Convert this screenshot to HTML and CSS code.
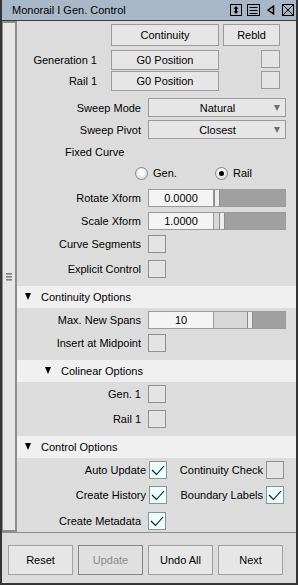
FILE: index.html
```html
<!DOCTYPE html>
<html>
<head>
<meta charset="utf-8">
<link rel="stylesheet" href="styles.css">
</head>
<body>
<div class="win">
  <div class="titlebar">
    <span class="title">Monorail I Gen. Control</span>
    <svg class="tools" width="64" height="14" viewBox="0 0 64 14">
      <rect x="0.5" y="1.5" width="11" height="11" fill="none" stroke="#000"/>
      <polygon points="6,3 3.5,5.8 8.5,5.8" fill="#000"/>
      <polygon points="6,11 3.5,8.2 8.5,8.2" fill="#000"/>
      <rect x="5" y="5" width="2" height="4" fill="#000"/>
      <rect x="17.5" y="1.5" width="12" height="11" fill="none" stroke="#000"/>
      <line x1="19.5" y1="4.5" x2="27.5" y2="4.5" stroke="#000"/>
      <line x1="19.5" y1="7.5" x2="27.5" y2="7.5" stroke="#000"/>
      <line x1="19.5" y1="10.5" x2="27.5" y2="10.5" stroke="#000"/>
      <polygon points="38,7 43.5,3.2 43.5,10.8" fill="none" stroke="#000" stroke-width="1.5" stroke-linejoin="miter"/>
      <rect x="52.5" y="1.5" width="11" height="11" fill="none" stroke="#000"/>
      <line x1="52.5" y1="1.5" x2="63.5" y2="12.5" stroke="#000"/>
      <line x1="63.5" y1="1.5" x2="52.5" y2="12.5" stroke="#000"/>
    </svg>
  </div>
  <div class="main">
    <div class="dock"><span class="grip"></span></div>
    <div class="content">
      <div class="top">
        <div class="row r-top">
          <div class="btn b-wide">Continuity</div>
          <div class="btn b-rebld">Rebld</div>
        </div>
        <div class="row r-gen mt4">
          <span class="glbl">Generation 1</span>
          <div class="btn b-wide">G0 Position</div>
          <div class="smallbox"></div>
        </div>
        <div class="row r-gen mt1">
          <span class="glbl">Rail 1</span>
          <div class="btn b-wide">G0 Position</div>
          <div class="smallbox"></div>
        </div>
        <div class="row r-sel mt7">
          <span class="lbl">Sweep Mode</span>
          <div class="select"><span class="sel-text">Natural</span><span class="arrow"></span></div>
        </div>
        <div class="row r-sel mt3">
          <span class="lbl">Sweep Pivot</span>
          <div class="select"><span class="sel-text">Closest</span><span class="arrow"></span></div>
        </div>
        <div class="row r-fixed mt2">Fixed Curve</div>
        <div class="row r-radio">
          <label class="opt"><span class="radio"></span>Gen.</label>
          <label class="opt"><span class="radio on"></span>Rail</label>
        </div>
        <div class="row mt6">
          <span class="lbl">Rotate Xform</span>
          <div class="slider">
            <div class="field">0.0000</div>
            <div class="track"><span class="fill" style="width:0px"></span><span class="handle"></span><span class="rest"></span></div>
          </div>
        </div>
        <div class="row mt5">
          <span class="lbl">Scale Xform</span>
          <div class="slider">
            <div class="field">1.0000</div>
            <div class="track"><span class="fill" style="width:5px"></span><span class="handle"></span><span class="rest"></span></div>
          </div>
        </div>
        <div class="row mt5">
          <span class="lbl">Curve Segments</span>
          <span class="cb"></span>
        </div>
        <div class="row mt7">
          <span class="lbl">Explicit Control</span>
          <span class="cb"></span>
        </div>
      </div>

      <div class="band"><span class="tri"></span>Continuity Options</div>
      <div class="body">
        <div class="row">
          <span class="lbl">Max. New Spans</span>
          <div class="slider">
            <div class="field">10</div>
            <div class="track"><span class="fill" style="width:33px"></span><span class="handle"></span><span class="rest"></span></div>
          </div>
        </div>
        <div class="row mt5">
          <span class="lbl">Insert at Midpoint</span>
          <span class="cb"></span>
        </div>
      </div>

      <div class="band sub"><span class="tri"></span>Colinear Options</div>
      <div class="body">
        <div class="row">
          <span class="lbl">Gen. 1</span>
          <span class="cb"></span>
        </div>
        <div class="row mt7">
          <span class="lbl">Rail 1</span>
          <span class="cb"></span>
        </div>
      </div>

      <div class="band"><span class="tri"></span>Control Options</div>
      <div class="body">
        <div class="row">
          <span class="clbl">Auto Update</span>
          <span class="cb on"><svg class="check" width="16" height="16" viewBox="0 0 16 16"><polyline points="2,8 6.5,12.5 14,4" fill="none" stroke="#111" stroke-width="1.1"/></svg></span>
          <span class="clbl2">Continuity Check</span>
          <span class="cb"></span>
        </div>
        <div class="row mt7">
          <span class="clbl">Create History</span>
          <span class="cb on"><svg class="check" width="16" height="16" viewBox="0 0 16 16"><polyline points="2,8 6.5,12.5 14,4" fill="none" stroke="#111" stroke-width="1.1"/></svg></span>
          <span class="clbl2">Boundary Labels</span>
          <span class="cb on"><svg class="check" width="16" height="16" viewBox="0 0 16 16"><polyline points="2,8 6.5,12.5 14,4" fill="none" stroke="#111" stroke-width="1.1"/></svg></span>
        </div>
        <div class="row mt8">
          <span class="lbl">Create Metadata</span>
          <span class="cb on"><svg class="check" width="16" height="16" viewBox="0 0 16 16"><polyline points="2,8 6.5,12.5 14,4" fill="none" stroke="#111" stroke-width="1.1"/></svg></span>
        </div>
      </div>
    </div>
  </div>
  <div class="footer">
    <div class="fbtn">Reset</div>
    <div class="fbtn off">Update</div>
    <div class="fbtn">Undo All</div>
    <div class="fbtn">Next</div>
  </div>
</div>
</body>
</html>
```
FILE: styles.css
```css
* { box-sizing: border-box; }
html, body { margin: 0; padding: 0; }
body {
  width: 298px;
  height: 585px;
  overflow: hidden;
  font: 11px "Liberation Sans", Arial, sans-serif;
  color: #000;
  background: #dcdcdc;
}
.win {
  width: 298px;
  height: 585px;
  display: flex;
  flex-direction: column;
  border: 2px solid #353535;
  border-top: 0;
  background: #dcdcdc;
}
.titlebar {
  flex: none;
  height: 21px;
  display: flex;
  align-items: center;
  padding-left: 10px;
  background: #a8b8c8;
  border-bottom: 1px solid #3a3a3a;
}
.title { white-space: nowrap; }
.tools { margin-left: auto; margin-right: 2px; display: block; }

.main { flex: none; height: 511px; display: flex; }
.dock {
  flex: none;
  width: 15px;
  background: #e6e6e6;
  border: 2px solid #8c8c8c;
  border-left-width: 1px;
  display: flex;
  align-items: center;
  justify-content: center;
}
.grip {
  display: block;
  width: 6px;
  height: 8px;
  background: repeating-linear-gradient(#7c7c7c 0 1px, #a6a6a6 1px 2px, #e6e6e6 2px 3px);
}
.content {
  flex: 1;
  display: flex;
  flex-direction: column;
  background: #dcdcdc;
}
.top { padding-top: 3px; }
.row { display: flex; align-items: center; height: 18px; flex: none; }
.mt1 { margin-top: 1px; }
.mt2 { margin-top: 2px; }
.mt3 { margin-top: 3px; }
.mt4 { margin-top: 4px; }
.mt5 { margin-top: 5px; }
.mt6 { margin-top: 6px; }
.mt7 { margin-top: 7px; }
.mt8 { margin-top: 8px; }

.lbl { width: 124px; margin-right: 7px; text-align: right; white-space: nowrap; }
.glbl { width: 80px; margin-right: 14px; text-align: right; white-space: nowrap; }
.clbl { width: 129px; margin-right: 3px; text-align: right; white-space: nowrap; }
.clbl2 { width: 96px; margin-right: 3px; text-align: right; white-space: nowrap; }

.btn {
  height: 100%;
  display: flex;
  align-items: center;
  justify-content: center;
  background: #e6e6e6;
  border: 1px solid #9a9a9a;
  white-space: nowrap;
}
.r-top { height: 22px; padding-left: 94px; gap: 4px; }
.b-wide { width: 108px; }
.b-rebld { width: 57px; }
.r-gen { height: 20px; }
.smallbox {
  align-self: flex-start;
  width: 19px;
  height: 18px;
  margin-left: 42px;
  background: #e4e4e4;
  border: 1px solid #9a9a9a;
}

.r-sel { height: 19px; }
.select {
  width: 138px;
  height: 100%;
  display: flex;
  align-items: center;
  padding: 0 5px 0 12px;
  background: #e6e6e6;
  border: 1px solid #9a9a9a;
}
.sel-text { flex: 1; text-align: center; }
.arrow {
  width: 0;
  height: 0;
  border-left: 3.5px solid transparent;
  border-right: 3.5px solid transparent;
  border-top: 6px solid #6e6e6e;
}

.r-fixed { height: 22px; padding-left: 48px; }
.r-radio { height: 20px; padding-left: 118px; }
.opt { width: 80px; display: flex; align-items: center; gap: 5px; }
.radio {
  width: 13px;
  height: 13px;
  border-radius: 50%;
  border: 1px solid #8a8a8a;
  background: radial-gradient(circle at 50% 40%, #ffffff 0, #f2f6f8 35%, #c6ccd2 100%);
  display: flex;
  align-items: center;
  justify-content: center;
}
.radio.on::after {
  content: "";
  width: 5px;
  height: 5px;
  border-radius: 50%;
  background: #000;
}

.slider { width: 138px; height: 100%; display: flex; }
.field {
  width: 66px;
  height: 100%;
  display: flex;
  align-items: center;
  justify-content: center;
  background: #f4f4f4;
  border: 1px solid #9a9a9a;
}
.track {
  flex: 1;
  display: flex;
  border: 1px solid #9a9a9a;
  border-left: 0;
  background: #d8d8d8;
}
.fill { display: block; background: #d8d8d8; }
.handle {
  display: block;
  width: 6px;
  background: #ececec;
  border-left: 1px solid #8c8c8c;
  border-right: 1px solid #8c8c8c;
}
.rest { display: block; flex: 1; background: #a0a0a0; }

.cb {
  width: 18px;
  height: 18px;
  flex: none;
  background: #e4e4e4;
  border: 1px solid #909090;
}
.cb.on { background: #eaffff; }
.check { display: block; }

.band {
  flex: none;
  height: 22px;
  margin-top: 8px;
  display: flex;
  align-items: center;
  padding-left: 8px;
  background: #f0f0f0;
  white-space: nowrap;
}
.band.sub { padding-left: 28px; }
.tri {
  width: 0;
  height: 0;
  margin-right: 10px;
  margin-top: -1px;
  border-left: 3.5px solid transparent;
  border-right: 3.5px solid transparent;
  border-top: 7px solid #000;
}
.body { padding-top: 3px; }

.footer {
  flex: 1;
  display: flex;
  align-items: flex-start;
  gap: 5px;
  padding: 12px 0 0 6px;
  border-top: 1px solid #8c8c8c;
}
.fbtn {
  width: 65px;
  height: 30px;
  display: flex;
  align-items: center;
  justify-content: center;
  background: #e6e6e6;
  border: 1px solid #a0a0a0;
}
.fbtn.off { color: #8a8a8a; border-color: #858585; background: #e0e0e0; }
```
